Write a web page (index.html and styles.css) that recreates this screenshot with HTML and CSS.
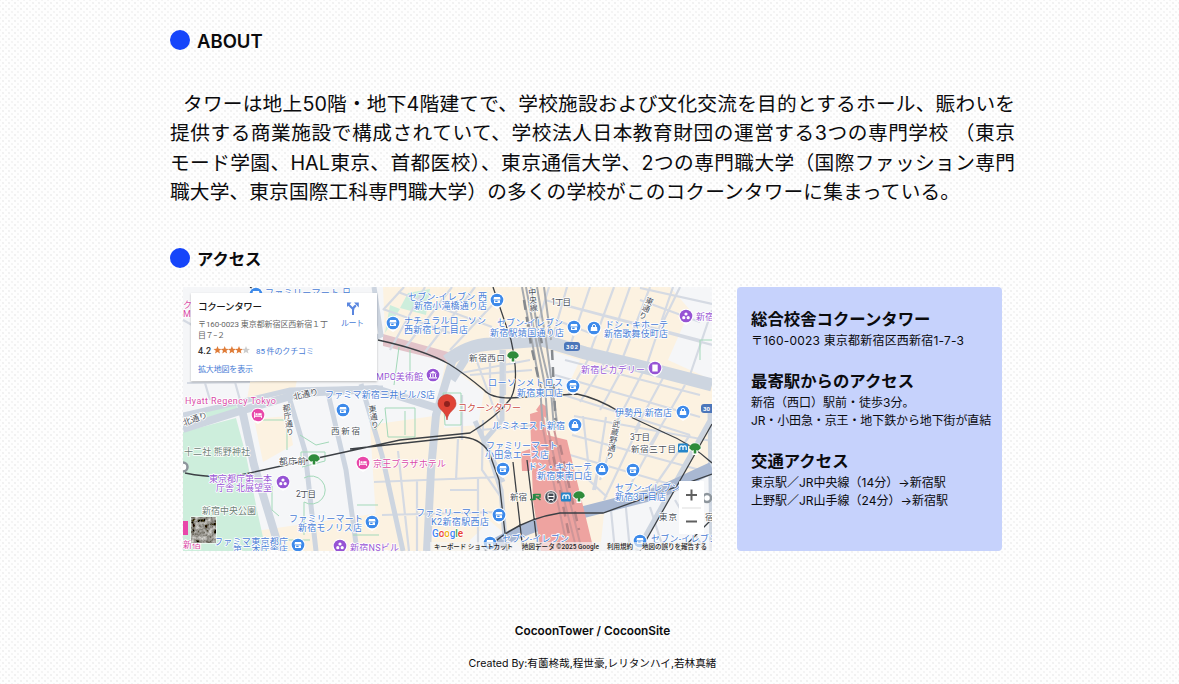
FILE: index.html
```html
<!DOCTYPE html>
<html lang="ja">
<head>
<meta charset="utf-8">
<title>CocoonTower</title>
<link rel="stylesheet" href="styles.css">
</head>
<body>
<main class="page">
<section class="about">
<h2 class="heading"><span class="dot"></span>ABOUT</h2>
<p class="lead"><span class="line first">タワーは地上50階・地下4階建てで、学校施設および文化交流を目的とするホール、賑わいを</span><span class="line">提供する商業施設で構成されていて、学校法人日本教育財団の運営する3つの専門学校 （東京</span><span class="line">モード学園、HAL東京、首都医校）、東京通信大学、2つの専門職大学（国際ファッション専門</span><span class="line last">職大学、東京国際工科専門職大学）の多くの学校がこのコクーンタワーに集まっている。</span></p>
</section>
<section class="access">
<h2 class="heading small"><span class="dot"></span>アクセス</h2>
<div class="columns">
<svg class="map" viewBox="183 287 529 264" width="529" height="264">
<defs>
<g id="shop"><path class="pin" d="M0 9Q-3 7.4-5 5.6A7.4 7.4 0 1 1 5 5.6Q3 7.4 0 9Z"/><circle r="6.3"/><path class="glyph" d="M-3-3H3L3.6-.6H-3.6ZM-3 .2H3V3H-3Z"/><path d="M-1.8.6H.6V2H-1.8Z"/></g>
<g id="bag"><path class="pin" d="M0 9Q-3 7.4-5 5.6A7.4 7.4 0 1 1 5 5.6Q3 7.4 0 9Z"/><circle r="6.3"/><path class="glyph" d="M-3-1H3L3.4 3H-3.4Z"/><path class="arc" d="M-1.6-.8V-2A1.6 1.6 0 0 1 1.6-2V-.8"/></g>
<g id="bed"><path class="pin" d="M0 9Q-3 7.4-5 5.6A7.4 7.4 0 1 1 5 5.6Q3 7.4 0 9Z"/><circle r="6.3"/><path class="glyph" d="M-4-3H-3.2V.6H4V3H3.2V1.8H-3.2V3H-4ZM-2.5-1.8H-.4V0H-2.5ZM.2-1.8H3.6V0H.2Z"/></g>
<g id="trio"><path class="pin" d="M0 9Q-3 7.4-5 5.6A7.4 7.4 0 1 1 5 5.6Q3 7.4 0 9Z"/><circle r="6.3"/><circle class="glyph" cy="-2" r="1.600"/><circle class="glyph" cx="-2.200" cy="1.700" r="1.600"/><circle class="glyph" cx="2.200" cy="1.700" r="1.600"/></g>
<g id="museum"><path class="pin" d="M0 9Q-3 7.4-5 5.6A7.4 7.4 0 1 1 5 5.6Q3 7.4 0 9Z"/><circle r="6.3"/><path class="glyph" d="M0-4 4-1.5H-4ZM-3-1H-2V2H-3ZM-.5-1H.5V2H-.5ZM2-1H3V2H2ZM-4 2.3H4V3.4H-4Z"/></g>
<g id="film"><path class="pin" d="M0 9Q-3 7.4-5 5.6A7.4 7.4 0 1 1 5 5.6Q3 7.4 0 9Z"/><circle r="6.3"/><path class="glyph" d="M-2.7-3.5H2.7V3.5H-2.7Z"/></g>
<g id="fan"><path class="halo" d="M-6.500 1A6.500 6.500 0 0 1 6.500 1L2.500 4V7H-2.500V4Z"/><path d="M-5.8.2A5.8 5 0 0 1 5.8.2L3 2.8 1.3 2V5.5H-1.3V2L-3 2.8Z"/></g>
<g id="metro"><rect x="-5" y="-4.5" width="10" height="9" rx="1"/><path class="wave" d="M-3.200 2V-.5A1.500 1.500 0 0 1 0-.5V2M0-.5A1.500 1.500 0 0 1 3.200-.5V2"/></g>
<g id="star"><path d="M0-4 1.1-1.2 4-1.1 1.7.7 2.5 3.5 0 1.9-2.5 3.5-1.7.7-4-1.1-1.1-1.2Z"/></g>
<filter id="noise" x="0" y="0" width="1" height="1"><feTurbulence type="fractalNoise" baseFrequency=".22" numOctaves="3" seed="4"/><feColorMatrix values="1.3 0 0 0 -.34 1.3 0 0 0 -.35 1.3 0 0 0 -.38 0 0 0 0 1"/></filter>
<filter id="shade" x="-.1" y="-.1" width="1.2" height="1.3"><feDropShadow dx="0" dy="1" stdDeviation="1.2" flood-opacity=".25"/></filter>
</defs>
<rect class="cream" x="183" y="287" width="529" height="264"/>
<path class="pale" d="M183 287H390L383 340 446 360 434 416 370 425 378 551H183ZM605 505 712 470V551H600ZM670 287H712V380L668 360 690 310ZM448 365 484 392 478 425 444 428ZM470 540 490 521 525 551H470ZM549 350 580 360 566 390 547 380Z"/>
<path class="cream" d="M250 382 297 380 294 394 247 400ZM254 419 288 416 293 445 263 462ZM256 531 400 510 405 551H262ZM383 287H500L505 335 448 350 385 333Z"/>
<path class="park" d="M183 432 236 418 246 455 257 510 266 551H183ZM205 410 236 402 238 414 205 420ZM408 293 430 289 426 315 400 308ZM390 305 400 309 385 333Z"/>
<path class="shopping" d="M383 334 448 352 448 362 383 346Z"/>
<path class="minor" d="M404 287 383 310M425 287 390 350M452 287 405 348M475 287 425 352M497 300 450 350M383 309 450 333M398 292 492 327M398 451 409 551M458 439 456 480M374 482 500 477M382 515 500 512M417 480V551M478 477V551M450 490H478M462 395V440M470 375 532 370M450 375 530 360M490 360V393M505 350V395M475 356 500 425M483 420 482 470 503 500M480 430 535 425M565 305 700 340M556 320 590 333M545 300 712 345M549 287 536 330M567 287 552 340M590 287 568 352M614 287 589 355M630 287 606 355M650 287 620 365M673 287 645 370M712 310 690 375M590 356 568 395M606 360 580 402M624 366 600 410M643 372 615 425M663 378 635 430M685 385 650 445M555 375 700 417M548 390 690 435M565 360 700 395M640 288 712 304M640 300 700 322M680 287 664 320M574 416 712 441M572 435 700 470M570 455 690 490M583 416 589 470M606 417 595 490M640 424 604 500M620 420 600 480M660 430 625 495M690 435 645 500M610 500 615 551M625 498 630 551M650 507 664 551M675 500 705 551M578 470 607 497M600 460 593 490M183 320 192 325M187 383 250 382M205 383 210 400M235 382 240 400"/>
<path class="road r5" d="M183 415 240 402 290 390 383 388M287 390 305 451 316 551M328 393 346 470 357 551M361 384 382 455 403 551M374 287 381 335 350 350"/>
<path class="road r8" d="M240 400 254 465 280 551M183 429 240 411 301 393 376 389 440 409M455 352 436 415 431 470 427 551M471 350 452 380"/>
<path class="road r14" d="M447 361Q468 345 490 344L542 340 585 353 635 365 712 385"/>
<path class="road r5" d="M502 350V420L485 440 501 490 506 551M538 425 540 551M712 417 637 551M710 411 712 551M475 421 503 482"/>
<path class="highway" d="M485 551Q525 524 580 513L658 493 712 468"/>
<path class="green-line" d="M263 420H287V450M383 419 375 430M300 435 316 445 329 442M301 463V452H325V461L302 467M304 478A14 14 0 1 1 304 502V535M272 486V510L279 516M385 408H415V437H388ZM405 411V435M443 393H461V425H445ZM394 385 399 347M374 350V375M353 535H379M700 360V340H712M357 505H378M270 540H310M386 375H410V350"/>
<path class="station" d="M530 414 543 410 547 435 567 440 594 551H541L533 500ZM521 452 530 449 532 471H522ZM536 410 541 403 547 407 546 418Z"/>
<path class="rails" d="M522 287 530 330 540 386 543 429M526 287 534 330 545 386 548 429M531 287 539 340 551 391 554 429M537 287 546 340 558 430M544 287 551 340"/>
<path class="rails in-station" d="M543 429 553 480 568 551M548 429 559 480 577 551M554 429 567 490 582 551"/>
<path class="rail-cross" d="M524 300 531 345 541 390M534 300 543 350M552 350 556 430"/>
<path class="rail-cross in-station" d="M550 440 569 535M560 445 579 530"/>
<path class="train" d="M378 340Q424 350 449 364 465 374 484 390 491 398 510 398L577 394Q597 398 620 412L665 433Q690 443 712 463M493 287 511 340Q520 380 511 398 498 416 470 433 440 436 400 440L313 459 245 474Q220 480 185 473M350 449 460 437Q479 437 489 452L499 480 507 551M513 462 523 551M527 460 538 551M485 551Q515 520 560 513H603L712 474M712 424 640 551M250 287 263 296M680 551 712 519"/>
<g class="shop">
<use href="#shop" x="497" y="300"/><use href="#shop" x="393" y="323"/><use href="#shop" x="574" y="327"/><use href="#bag" x="594" y="328"/><use href="#shop" x="573" y="386"/><use href="#shop" x="343" y="410"/><use href="#bag" x="683" y="412"/><use href="#bag" x="575" y="425"/><use href="#shop" x="503" y="469"/><use href="#bag" x="602" y="469"/><use href="#shop" x="633" y="470"/><use href="#shop" x="372" y="522"/><use href="#shop" x="499" y="515"/><use href="#shop" x="298" y="545"/><use href="#shop" x="490" y="543"/><use href="#shop" x="640" y="541"/><use href="#shop" x="256" y="294"/>
</g>
<g class="purple"><use href="#museum" x="433" y="375"/><use href="#trio" x="686" y="316"/><use href="#film" x="655" y="368"/><use href="#trio" x="283" y="482"/><use href="#trio" x="340" y="546"/></g>
<g class="pink"><use href="#bed" x="258" y="415"/><use href="#bed" x="363" y="463"/><path d="M183 521H188V535H183Z"/></g>
<g class="green"><use href="#fan" x="513" y="356"/><use href="#fan" x="314" y="459"/><use href="#fan" x="695" y="448"/><use href="#fan" x="579" y="496"/></g>
<g class="metro"><use href="#metro" x="683" y="448"/><use href="#metro" x="566" y="497"/></g>
<path class="jr" d="M530 499.500H533.500V494M535 500V494.500H540V497H536.500L540.500 500"/>
<g class="train-badge"><circle cx="551" cy="497" r="6.300"/><rect class="car" x="548" y="493" width="6" height="6.500" rx="1"/><path class="car" d="M548.500 501.500 550 499.500M553.500 501.500 552 499.500M548 496.500H554"/></g>
<g class="shield"><rect x="564" y="342" width="16" height="9" rx="3"/><rect x="701" y="404" width="16" height="9" rx="3"/><text x="566" y="349" textLength="12">302</text><text x="703" y="411">30</text></g>
<g class="label blue">
<text x="408" y="300" textLength="79">セブン-イレブン 西</text><text x="414" y="309" textLength="73">新宿小滝橋通り店</text>
<text x="404" y="323.5" textLength="82">ナチュラルローソン</text><text x="404" y="332.5" textLength="64">西新宿七丁目店</text>
<text x="497" y="326" textLength="66">セブン-イレブン</text><text x="490" y="335.5" textLength="74">新宿駅靖国通り店</text>
<text x="605" y="328" textLength="63">ドン・キホーテ</text><text x="604" y="337" textLength="64">新宿歌舞伎町店</text>
<text x="488" y="386" textLength="75">ローソンメトロス</text><text x="517" y="395.5" textLength="46">新宿東口店</text>
<text x="325" y="398" textLength="110">ファミマ新宿三井ビル/S店</text><text x="615" y="416" textLength="57">伊勢丹 新宿店</text><text x="492" y="429" textLength="73">ルミネエスト新宿</text>
<text x="486" y="449" textLength="72">ファミリーマート</text><text x="485" y="458" textLength="64">小田急エース店</text><text x="528" y="470" textLength="64">ドン・キホーテ</text><text x="537" y="479" textLength="55">新宿東南口店</text>
<text x="615" y="491" textLength="65">セブン-イレブン</text><text x="615" y="500" textLength="51">新宿3丁目店</text>
<text x="289" y="522" textLength="74">ファミリーマート</text><text x="298" y="531" textLength="64">新宿モノリス店</text><text x="416" y="516" textLength="73">ファミリーマート</text><text x="431" y="525" textLength="58">K2新宿駅西店</text>
<text x="214" y="545" textLength="74">ファミマ東京都庁</text><text x="233" y="553" textLength="55">第二本庁舎店</text><text x="502" y="541.500" textLength="67">セブン-イレブン</text><text x="651" y="541.500" textLength="67">セブン-イレブン</text><text x="265" y="296" textLength="86">ファミリーマート 日</text>
</g>
<g class="label violet"><text x="376" y="380" textLength="47">MPO美術館</text><text x="581" y="373" textLength="64">新宿ピカデリー</text><text x="696" y="320">新宿</text><text x="209" y="482" textLength="63">東京都庁第一本</text><text x="216" y="491" textLength="56">庁舎 北展望室</text><text x="350" y="550.5" textLength="49">新宿NSビル</text></g>
<g class="label rose"><text x="185" y="404" textLength="91">Hyatt Regency Tokyo</text><text x="373" y="467" textLength="73">京王プラザホテル</text><text x="183" y="548">新宿</text><text x="183" y="308">ク</text><text x="183" y="317">M</text></g>
<g class="label dark"><text x="469" y="360.5" textLength="36">新宿西口</text><text x="279" y="463.5" textLength="27">都庁前</text><text x="631" y="452" textLength="45">新宿三丁目</text><text x="510" y="500" textLength="17">新宿</text><text x="551" y="305" textLength="20">1丁目</text><text x="331" y="434" textLength="29">西新宿</text><text x="296" y="497" textLength="20">2丁目</text><text x="630" y="440" textLength="20">3丁目</text><text x="659" y="520" textLength="18">東京</text><text transform="translate(294 400) rotate(-13)">北通り</text><text transform="translate(184 426) rotate(-20)">北通り</text><text class="upright" transform="translate(285 404) rotate(-8)">都庁通り</text><text class="upright" transform="translate(371 405) rotate(-8)">東通り</text><text class="upright" transform="translate(531 288) rotate(-5)">中央線</text><text class="upright" transform="translate(650 297) rotate(24)">東通り</text><text class="upright" transform="translate(616 420) rotate(11)">武蔵野通り</text></g>
<g class="label moss"><text x="184" y="455" textLength="66">十二社 熊野神社</text><text x="202" y="513.5" textLength="54">新宿中央公園</text></g>
<text class="label tower" x="458" y="410.5" textLength="63">コクーンタワー</text>
<circle class="ring" cx="183" cy="467" r="4.5"/>
<path class="marker" d="M447 420C446 411 438 410 438 403.5A9 9 0 0 1 456 403.5C456 410 448 411 447 420Z"/><circle class="marker-eye" cx="447" cy="404" r="3"/>
<rect class="panel" x="191" y="293" width="186" height="88" filter="url(#shade)"/>
<text class="card-title" x="198" y="309.5" textLength="64">コクーンタワー</text>
<g class="card-text"><text x="198" y="326.5" textLength="130">〒160-0023 東京都新宿区西新宿１丁</text><text x="198" y="338" textLength="27">目７−２</text></g>
<text class="rating" x="198" y="353.5" textLength="13">4.2</text>
<g class="stars"><use href="#star" x="217.5" y="350"/><use href="#star" x="224.7" y="350"/><use href="#star" x="231.9" y="350"/><use href="#star" x="239" y="350"/><use class="off" href="#star" x="246" y="350"/></g>
<g class="card-link"><text x="256" y="353.5" textLength="58">85 件のクチコミ</text><text x="198" y="372" textLength="55">拡大地図を表示</text><text x="341" y="326.3" textLength="23">ルート</text></g>
<path class="route" d="M353 315V309L348.500 304.500M353 310.500Q353 307 356 305.500"/><path class="route-head" d="M347 302.500H351.500L347 307ZM354 302.500H358.800V307.500Z"/>
<rect class="thumb-edge" x="190.5" y="516.5" width="26" height="27" rx="1"/><rect x="191.5" y="517.5" width="24" height="25" filter="url(#noise)"/>
<circle class="ring" cx="707" cy="498" r="4"/><text class="label dark" x="705" y="520">宿</text>
<rect class="panel" x="679" y="481" width="25" height="53" rx="1"/><path class="divider" d="M682 508H701"/><path class="zoom" d="M686 495H697M691.5 489.500V500.500M686 521.500H697"/>
<text class="google" x="432" y="537" textLength="31"><tspan class="g1">G</tspan><tspan class="g2">o</tspan><tspan class="g3">o</tspan><tspan class="g1">g</tspan><tspan class="g4">l</tspan><tspan class="g2">e</tspan></text>
<rect class="strip" x="430" y="542" width="282" height="9"/>
<g class="terms"><text x="434" y="548.500" textLength="79">キーボード ショートカット</text><text x="522" y="548.500" textLength="77">地図データ ©2025 Google</text><text x="607" y="548.500" textLength="26">利用規約</text><text x="642" y="548.500" textLength="65">地図の誤りを報告する</text></g>
</svg>
<aside class="info">
<h3>総合校舎コクーンタワー</h3><p><span class="address">〒160-0023 東京都新宿区西新宿1-7-3</span></p>
<h3>最寄駅からのアクセス</h3><p>新宿（西口）駅前・徒歩3分。<br><span class="lines">JR・小田急・京王・地下鉄から地下街が直結</span></p>
<h3>交通アクセス</h3><p>東京駅／JR中央線（14分）→新宿駅<br>上野駅／JR山手線（24分）→新宿駅</p>
</aside>
</div>
</section>
<footer class="footer"><strong>CocoonTower / CocoonSite</strong><span>Created By:有薗柊哉,程世豪,レリタンハイ,若林真緒</span></footer>
</main>
</body>
</html>
```
FILE: styles.css
```css
* { box-sizing: border-box; }
html { overflow: hidden; }
body {
  margin: 0;
  height: 684px;
  overflow: hidden;
  color: #0b0b0d;
  font-family: Inter, "Noto Sans CJK JP", sans-serif;
  background:
    radial-gradient(circle, #ededed 0 .6px, transparent 1px) 0 0 / 6px 6px,
    radial-gradient(circle, #f1f1f1 0 .6px, transparent 1px) 3px 3px / 6px 6px #fefefe;
}
.page { width: 845px; margin-left: 170px; padding-top: 28px; }
.heading { display: flex; align-items: center; gap: 7px; height: 27px; margin: 0; font-size: 18.5px; font-weight: 600; line-height: 27px; }
.heading.small { font-size: 16.300px; font-weight: 700; }
.dot { width: 20px; height: 20px; margin-bottom: 3px; border-radius: 50%; background: #1645fa; }
.lead { margin: 34.5px 0 38px; font-size: 19.7px; line-height: 29.6px; }
.line { display: block; height: 29.6px; white-space: nowrap; text-align: justify; text-align-last: justify; }
.line.first { padding-left: 13px; }
.line.last { width: 790px; }
.columns { display: flex; align-items: flex-start; gap: 25px; margin: 14.100px 0 0 13px; }
.map { flex: none; display: block; }
.info { flex: none; width: 265px; height: 264px; padding: 20px 14px; border-radius: 4px; background: #c6d2fc; }
.info h3 { margin: 0; font-size: 16.400px; line-height: 25px; white-space: nowrap; }
.info p { margin: 0 0 19px; font-size: 12px; line-height: 18px; white-space: nowrap; }
.address { letter-spacing: .2px; }
.lines { letter-spacing: -.12px; }
.footer { display: flex; flex-direction: column; align-items: center; gap: 15px; margin-top: 71.500px; font-size: 10.600px; line-height: 18px; }
.footer strong { font-size: 11.800px; font-weight: 600; }

.cream { fill: #fcf2e1; }
.pale { fill: #f5f6f8; }
.park { fill: #cdeedc; }
.shopping { fill: #e2c3c9; }
.minor, .road, .highway, .green-line, .rails, .rail-cross, .train { fill: none; }
.minor { stroke: #d5dae3; stroke-width: 2.200; }
.road { stroke: #cdd5e0; }
.r5 { stroke-width: 5; }
.r8 { stroke-width: 8; }
.r14 { stroke-width: 13; }
.highway { stroke: #a9b8d2; stroke-width: 12; }
.green-line { stroke: #a3d9b9; stroke-width: 1; }
.station { fill: #eea3a0; }
.rails { stroke: #a7abb0; stroke-width: 2; }
.rails.in-station { stroke: #cf9698; }
.rail-cross { stroke: #85898e; stroke-width: 2.500; stroke-dasharray: 10 7; }
.rail-cross.in-station { stroke: #b98486; }
.train { stroke: #3c4045; stroke-width: 1.300; }
.pin { fill: #fff; }
.glyph { fill: #fff; }
.arc { fill: none; stroke: #fff; }
.shop { fill: #3d8aea; }
.purple { fill: #9653d4; }
.pink { fill: #e848aa; }
.green { fill: #2f8b3b; }
.halo { fill: #fff; }
.metro { fill: #2385ca; }
.wave { fill: none; stroke: #fff; stroke-width: 1.200; }
.jr { fill: none; stroke: #278a45; stroke-width: 1.500; }
.train-badge { fill: #454b54; stroke: #fff; }
.car { fill: none; stroke: #fff; stroke-width: 1; }
.shield { fill: #4c76b9; }
.shield text { fill: #fff; font: 700 6px Roboto, sans-serif; }
.label { font: 400 9px Roboto, "Noto Sans CJK JP", sans-serif; paint-order: stroke; stroke: #fff; stroke-width: 1.600px; stroke-linejoin: round; }
.blue { fill: #4a80d6; }
.violet { fill: #9957d5; }
.rose { fill: #da4ca7; }
.dark { fill: #4b5057; font-size: 8.500px; }
.upright { writing-mode: vertical-rl; font-size: 8px; }
.moss { fill: #6d8277; }
.tower { fill: #cb4b43; }
.ring { fill: #fff; stroke: #8d959c; stroke-width: 2.500; }
.marker { fill: #e04335; stroke: #bd3028; stroke-width: .6; }
.marker-eye { fill: #8f211d; }
.panel { fill: #fff; }
.card-title { font: 500 9.500px Roboto, "Noto Sans CJK JP", sans-serif; fill: #171717; }
.card-text, .card-link { font: 8px Roboto, "Noto Sans CJK JP", sans-serif; fill: #666; }
.card-link { fill: #477bd5; }
.rating { font: 500 9px Roboto, sans-serif; fill: #333; }
.stars { fill: #df7c38; }
.off { fill: #ccc; }
.route { fill: none; stroke: #5a86df; stroke-width: 2; }
.route-head { fill: #5a86df; }
.thumb-edge { fill: #fff; }
.divider { stroke: #ddd; }
.zoom { stroke: #606060; stroke-width: 2; }
.google { font: 500 10px Roboto, sans-serif; paint-order: stroke; stroke: #fff; stroke-width: 1.500px; }
.g1 { fill: #4285f4; }
.g2 { fill: #ea4335; }
.g3 { fill: #eeb10b; }
.g4 { fill: #34a853; }
.strip { fill: #f5f5f5; opacity: .65; }
.terms { font: 500 6.500px Roboto, "Noto Sans CJK JP", sans-serif; fill: #222; }
```
